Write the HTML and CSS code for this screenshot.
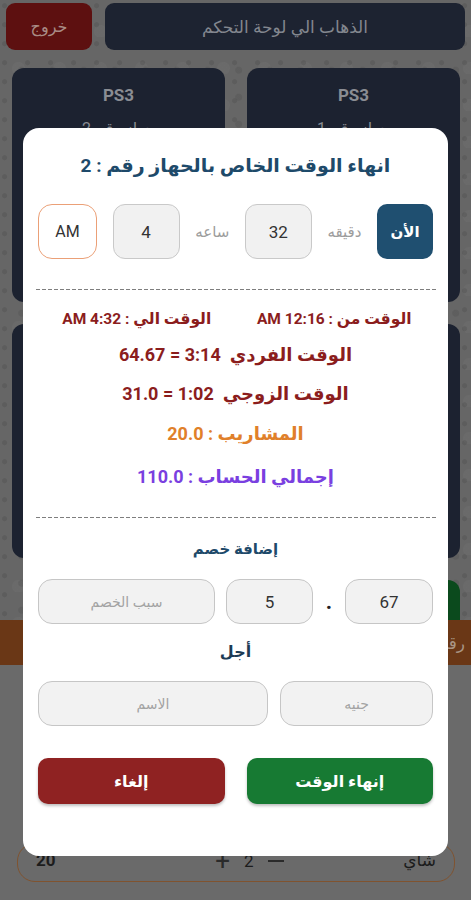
FILE: index.html
```html
<!DOCTYPE html>
<html lang="ar" dir="rtl">
<head>
<meta charset="utf-8">
<title>إنهاء الوقت</title>
<link rel="stylesheet" href="styles.css">
</head>
<body>
<div class="screen">
  <header class="topbar">
    <div class="nav-btn">الذهاب الي لوحة التحكم</div>
    <div class="exit-btn">خروج</div>
  </header>
  <section class="cards">
    <div class="card"><div class="card-title">PS3</div><div class="card-sub">جهاز رقم 1</div></div>
    <div class="card"><div class="card-title">PS3</div><div class="card-sub">جهاز رقم 2</div></div>
    <div class="card"></div>
    <div class="card"></div>
    <div class="card card-green"></div>
  </section>
  <section class="sheet">
    <div class="sheet-head">رقم الطلب</div>
    <div class="sheet-body">
      <div class="order-row">
        <span class="order-name">شاي</span>
        <span class="qty"><span class="qty-minus"></span><span class="qty-num">2</span><span class="qty-btn">+</span></span>
        <span class="order-price">20</span>
      </div>
    </div>
  </section>
</div>

<div class="overlay">
  <div class="dialog">
    <h1 class="dlg-title">انهاء الوقت الخاص بالحهاز رقم : 2</h1>
    <div class="time-row">
      <div class="now-btn">الأن</div>
      <span class="time-label">دقيقه</span>
      <div class="time-box">32</div>
      <span class="time-label">ساعه</span>
      <div class="time-box">4</div>
      <div class="ampm-box">AM</div>
    </div>
    <div class="dash"></div>
    <div class="info">
      <div class="info-pair">
        <span>الوقت من : 12:16 AM</span>
        <span>الوقت الي : 4:32 AM</span>
      </div>
      <div class="info-line red l2">الوقت الفردي&nbsp; 3:14 = 64.67</div>
      <div class="info-line red l3">الوقت الزوجي&nbsp; 1:02 = 31.0</div>
      <div class="info-line orange l4">المشاريب : 20.0</div>
      <div class="info-line purple l5">إجمالي الحساب : 110.0</div>
    </div>
    <div class="dash"></div>
    <div class="section-label first">إضافة خصم</div>
    <div class="field-row">
      <div class="field w88">67</div>
      <span class="dot">.</span>
      <div class="field w87">5</div>
      <div class="field grow ph">سبب الخصم</div>
    </div>
    <div class="section-label second">أجل</div>
    <div class="field-row gap12">
      <div class="field w153 ph">جنيه</div>
      <div class="field grow ph">الاسم</div>
    </div>
    <div class="actions">
      <div class="btn btn-green">إنهاء الوقت</div>
      <div class="btn btn-red">إلغاء</div>
    </div>
  </div>
</div>
</body>
</html>
```

FILE: styles.css
```css
* { box-sizing: border-box; }
html, body { margin: 0; padding: 0; }
body {
  width: 471px;
  height: 900px;
  overflow: hidden;
  font-family: "Roboto", "DejaVu Sans", sans-serif;
  background: #676767;
}
.screen {
  height: 900px;
  display: flex;
  flex-direction: column;
  background-color: #666666;
  background-image:
    radial-gradient(circle at 20% 30%, rgba(50,50,50,0.18) 0 2px, transparent 3px),
    radial-gradient(circle at 70% 60%, rgba(50,50,50,0.15) 0 3px, transparent 4px),
    radial-gradient(circle at 45% 85%, rgba(120,120,120,0.25) 0 6px, transparent 7px);
  background-size: 23px 19px, 31px 27px, 41px 37px;
}
.topbar {
  display: flex;
  gap: 13px;
  padding: 3px 6px 0 6px;
  height: 50px;
}
.nav-btn {
  flex: 1;
  background: #1d2331;
  border-radius: 9px;
  color: #83878f;
  font-size: 17px;
  display: flex;
  align-items: center;
  justify-content: center;
}
.exit-btn {
  width: 86px;
  background: #5d1010;
  border-radius: 9px;
  color: #a98c86;
  font-size: 16px;
  display: flex;
  align-items: center;
  justify-content: center;
}
.cards {
  height: 570px;
  overflow: hidden;
  padding: 18px 11px 0 12px;
  display: grid;
  grid-template-columns: 213px 213px;
  grid-auto-rows: 234px;
  gap: 22px 22px;
}
.card {
  background: #1c2230;
  border-radius: 12px;
  text-align: center;
  color: #8a8d93;
}
.card-title { font-weight: bold; font-size: 17px; margin-top: 17px; }
.card-sub { font-size: 16px; margin-top: 14px; }
.card-green { background: #0b4a1d; }
.sheet { flex: 1; display: flex; flex-direction: column; }
.sheet-head {
  height: 45px;
  background: #6a3716;
  color: #a99584;
  font-size: 17px;
  display: flex;
  align-items: center;
  padding-right: 6px;
}
.sheet-body {
  flex: 1;
  background: #6a6a6a;
  padding: 178px 16px 0 17px;
}
.order-row {
  height: 39px;
  border: 1px solid #80532f;
  border-radius: 18px;
  display: flex;
  align-items: flex-start;
  justify-content: space-between;
  padding: 6px 18px 0 18px;
  color: #1c1c1c;
  font-size: 17px;
}
.order-price { font-weight: bold; }
.qty { display: flex; align-items: center; gap: 14px; margin-left: 40px; height: 22px; }
.qty-btn { font-size: 26px; color: #2a2a2a; line-height: 22px; }
.qty-minus { width: 16px; height: 2px; background: #2a2a2a; }

.overlay {
  position: fixed;
  inset: 0;
  padding: 128px 23px 0 23px;
}
.dialog {
  background: #fff;
  border-radius: 16px;
  padding: 25px 15px 53px 15px;
  height: 728px;
}
.dlg-title {
  margin: 0;
  text-align: center;
  font-size: 19px;
  line-height: 26px;
  font-weight: bold;
  color: #1e4a6a;
}
.time-row {
  margin-top: 25px;
  height: 55px;
  display: flex;
  align-items: center;
  justify-content: space-between;
}
.now-btn {
  width: 56px;
  height: 55px;
  border-radius: 10px;
  background: #1f4f70;
  color: #fff;
  font-weight: bold;
  font-size: 15px;
  display: flex;
  align-items: center;
  justify-content: center;
}
.time-label { color: #9c9c9c; font-size: 15px; }
.time-box {
  width: 67px;
  height: 55px;
  border-radius: 12px;
  background: #f1f1f1;
  border: 1.5px solid #c9c9c9;
  display: flex;
  align-items: center;
  justify-content: center;
  font-size: 17px;
  color: #333;
}
.ampm-box {
  width: 59px;
  height: 55px;
  border-radius: 14px;
  background: #fff;
  border: 1.5px solid #eba077;
  display: flex;
  align-items: center;
  justify-content: center;
  font-size: 16px;
  color: #333;
}
.dash {
  margin: 30px -3px 0 -4px;
  height: 1px;
  background: repeating-linear-gradient(to left, #7e7e7e 0 4px, transparent 4px 6px);
}
.info { color: #8b1d1d; font-weight: bold; }
.info-pair {
  margin-top: 17px;
  display: grid;
  grid-template-columns: 1fr 1fr;
  text-align: center;
  font-size: 15.5px;
  line-height: 24px;
}
.info-line { text-align: center; font-size: 18px; line-height: 24px; }
.l2 { margin-top: 12px; }
.l3 { margin-top: 15px; }
.l4 { margin-top: 16px; }
.l5 { margin-top: 19px; }
.red { color: #8b1d1d; }
.orange { color: #e0802a; }
.purple { color: #7a3fe0; }
.info + .dash { margin-top: 28px; }
.section-label {
  text-align: center;
  font-size: 15px;
  line-height: 22px;
  color: #1e4a6a;
  font-weight: bold;
}
.section-label.first { margin-top: 20px; }
.section-label.second { margin-top: 17px; color: #1d3b55; font-size: 16px; }
.field-row {
  margin-top: 19px;
  height: 45px;
  display: flex;
  align-items: stretch;
}
.field-row.gap12 { gap: 12px; margin-top: 18px; }
.field {
  background: #f2f2f2;
  border: 1.5px solid #c6c6c6;
  border-radius: 14px;
  display: flex;
  align-items: center;
  justify-content: center;
  font-size: 17px;
  color: #333;
}
.field.ph { color: #a3a3a3; font-size: 14px; }
.w88 { width: 88px; }
.w87 { width: 87px; margin-left: 11px; }
.w153 { width: 153px; }
.grow { flex: 1; }
.dot {
  width: 32px;
  display: flex;
  align-items: center;
  justify-content: center;
  font-size: 22px;
  font-weight: bold;
  color: #222;
}
.actions {
  margin-top: 32px;
  display: grid;
  grid-template-columns: 1fr 1fr;
  gap: 22px;
}
.btn {
  height: 46px;
  border-radius: 10px;
  display: flex;
  align-items: center;
  justify-content: center;
  color: #fff;
  font-weight: bold;
  font-size: 16px;
  box-shadow: 0 2px 3px rgba(0,0,0,0.25);
}
.btn-green { background: #177a33; }
.btn-red { background: #8f2222; }
```
